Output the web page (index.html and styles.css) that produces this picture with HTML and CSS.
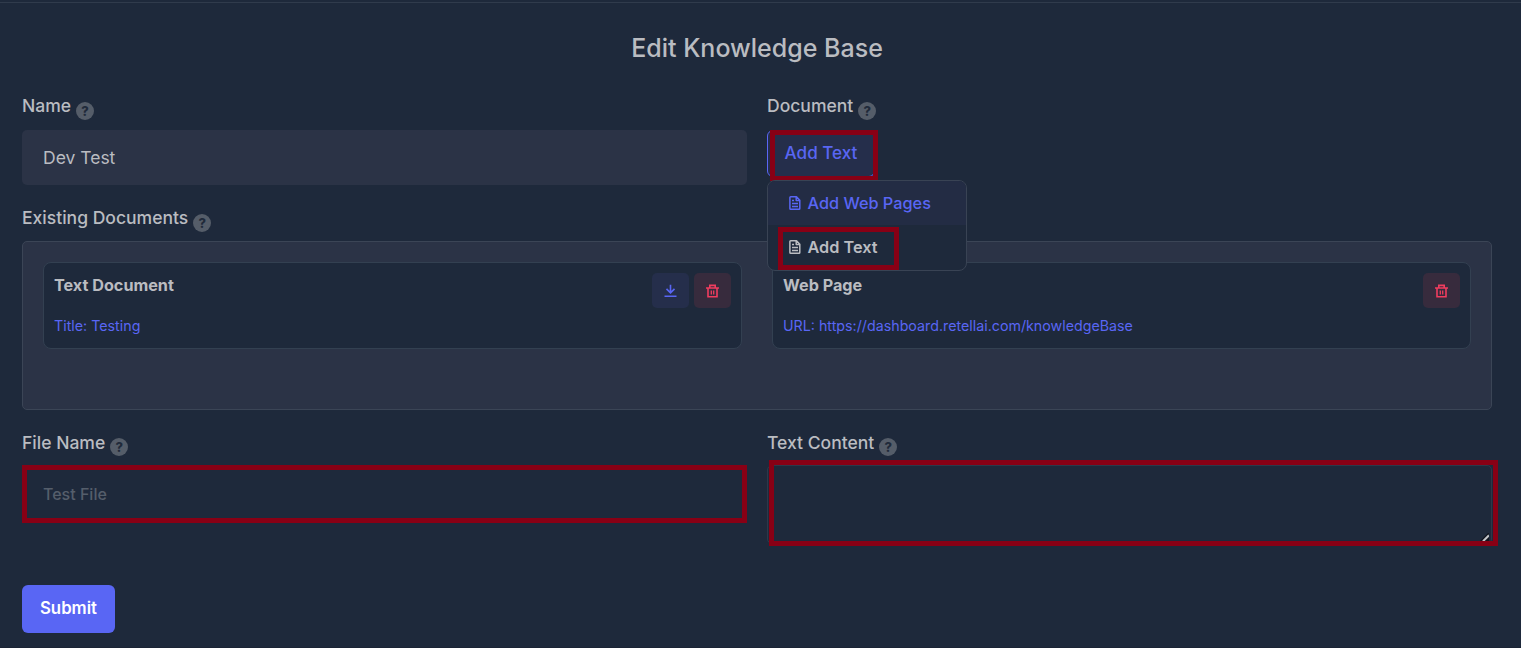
FILE: index.html
```html
<!DOCTYPE html>
<html lang="en">
<head>
<meta charset="utf-8">
<title>Edit Knowledge Base</title>
<link rel="stylesheet" href="styles.css">
</head>
<body>
<svg class="defs" aria-hidden="true">
  <symbol id="i-doc" viewBox="0 0 12 14"><path fill="none" stroke="currentColor" stroke-width="1.5" stroke-linejoin="round" d="M1.7.8h5.8l3.3 3.4v8.2q0 .8-.8.8H1.7q-.8 0-.8-.8V1.6q0-.8.8-.8zM7.2.9v3.5h3.5M3 7.4h6M3 10.4h6M3 4.4h2"/></symbol>
  <symbol id="i-trash" viewBox="0 0 14 14"><path fill="none" stroke="currentColor" stroke-width="1.6" d="M0 4h13M3.8 3.8V1.4h5.4v2.3M2 4v8.7h9V4"/><path fill="none" stroke="currentColor" stroke-width="1.3" d="M5.3 6.4v4M7.7 6.4v4"/></symbol>
  <symbol id="i-down" viewBox="0 0 14 14"><path fill="none" stroke="currentColor" stroke-width="1.6" d="M6.5.8v8M2.5 4.9l4 4 4-4M.5 12.2h12"/></symbol>
</svg>
<main class="page">
  <h1 class="title">Edit Knowledge Base</h1>
  <form class="form">
    <section class="field">
      <label class="label">Name <span class="help">?</span></label>
      <div class="input filled">Dev Test</div>
    </section>
    <section class="field">
      <label class="label">Document <span class="help">?</span></label>
      <div class="dropdown">
        <button type="button" class="toggle">Add Text</button>
        <div class="menu">
          <div class="item active"><svg class="doc"><use href="#i-doc"/></svg>Add Web Pages</div>
          <div class="item"><svg class="doc"><use href="#i-doc"/></svg>Add Text</div>
          <span class="mark mark-item"></span>
        </div>
        <span class="mark mark-toggle"></span>
      </div>
    </section>
    <section class="existing">
      <label class="label">Existing Documents <span class="help">?</span></label>
      <div class="docs">
        <article class="card">
          <div><h2 class="name">Text Document</h2><p class="meta">Title: Testing</p></div>
          <div class="actions">
            <span class="act blue"><svg><use href="#i-down"/></svg></span>
            <span class="act red"><svg><use href="#i-trash"/></svg></span>
          </div>
        </article>
        <article class="card">
          <div><h2 class="name">Web Page</h2><p class="meta">URL: https://dashboard.retellai.com/knowledgeBase</p></div>
          <div class="actions"><span class="act red"><svg><use href="#i-trash"/></svg></span></div>
        </article>
      </div>
    </section>
    <section class="field lower">
      <label class="label">File Name <span class="help">?</span></label>
      <div class="input marked">Test File</div>
    </section>
    <section class="field lower">
      <label class="label">Text Content <span class="help">?</span></label>
      <div class="area"><svg class="grip" viewBox="0 0 9 8"><path d="M0 8L8 0H9V8z" fill="#11151f"/><path d="M3 8.3L9 2.3" stroke="#c4c6ca" stroke-width="2"/></svg><span class="mark mark-area"></span></div>
    </section>
    <button type="button" class="submit">Submit</button>
  </form>
</main>
</body>
</html>
```
FILE: styles.css
```css
* { box-sizing: border-box; }
body { margin: 0; background: #1e293b; color: #babcc1; font-family: Inter, sans-serif; }
.defs { display: none; }
.page { height: 648px; padding: 0 29px 0 22px; overflow: hidden; background: linear-gradient(#303b4c, #303b4c) 0 2px / 100% 1px no-repeat, linear-gradient(#1b2435, #1b2435) 0 647px / 100% 1px no-repeat; }
.title { margin: 0; padding-top: 32px; height: 94px; text-align: center; font-size: 25px; line-height: 32px; font-weight: 500; }
.form { display: grid; grid-template-columns: 725px 725px; column-gap: 20px; grid-template-rows: 112px 225px 154px 48px; align-content: start; }
.label { display: flex; align-items: flex-start; gap: 5px; height: 36px; font-size: 17.55px; line-height: 24px; font-weight: 500; }
.help { width: 18px; height: 18px; margin-top: 8px; border-radius: 50%; background: #555d69; color: #202a3a; text-align: center; font-size: 13px; line-height: 18px; font-weight: 800; }
.input { height: 55px; padding: 0 21px; border-radius: 5px; line-height: 55px; font-size: 17.5px; }
.filled { background: #2b3346; }
.dropdown { position: relative; }
.toggle { width: 108px; height: 47px; padding: 0 0 2px; border: 1px solid #5966f4; border-radius: 6px; background: #252e4b; color: #5966f4; font: 500 17.1px/43px Inter, sans-serif; display: block; }
.menu { position: absolute; z-index: 2; left: 0; top: 50px; width: 200px; height: 91px; border: 1px solid #394354; border-radius: 8px; background: #1e293b; overflow: hidden; }
.item { display: flex; align-items: center; gap: 6.5px; height: 44px; padding-left: 21px; font-size: 16.3px; font-weight: 600; }
.item.active { background: #232c44; color: #5966f4; font-weight: 500; }
.doc { width: 12px; height: 14px; margin-top: -1px; }
.mark { position: absolute; border: 5px solid #880015; }
.mark-toggle { left: 3px; top: 0; width: 108px; height: 51px; z-index: 1; }
.mark-item { left: 10px; top: 46px; width: 121px; height: 43px; }
.existing { grid-column: 1 / 3; }
.docs { display: grid; grid-template-columns: 699px 699px; column-gap: 30px; align-items: start; height: 169px; margin-top: -1px; padding: 20px; border: 1px solid #3b4556; border-radius: 5px; background: #2b3346; }
.card { display: flex; justify-content: space-between; height: 87px; padding: 10px; border: 1px solid #334051; border-radius: 8px; background: #1e293b; }
.name { margin: 1px 0 0; font-size: 16.2px; line-height: 22px; font-weight: 700; }
.meta { margin: 20px 0 0; font-size: 14.25px; line-height: 20px; color: #5966f4; }
.actions { display: flex; gap: 5px; }
.act { width: 37px; height: 35px; border-radius: 5px; display: flex; align-items: center; justify-content: center; }
.act svg { width: 14px; height: 14px; }
.blue { background: #252e4b; color: #5966f4; }
.red { background: #372b3d; color: #f03d5f; }
.lower .label { height: 34px; }
.lower .help { margin-top: 7px; }
.marked { height: 58px; border: 5px solid #880015; border-radius: 0; padding: 0 16px; line-height: 48px; font-size: 16px; font-weight: 500; color: #555e6b; }
.area { position: relative; height: 79px; border: 1px solid #2d394a; border-radius: 5px; }
.grip { position: absolute; right: 2px; bottom: 2px; width: 9px; height: 8px; }
.mark-area { left: 1px; top: -6px; width: 729px; height: 86px; }
.submit { width: 93px; height: 48px; padding: 0 0 2px; border: 0; border-radius: 6px; background: #5966f4; color: #fff; font: 600 16.8px/44px Inter, sans-serif; }
```
